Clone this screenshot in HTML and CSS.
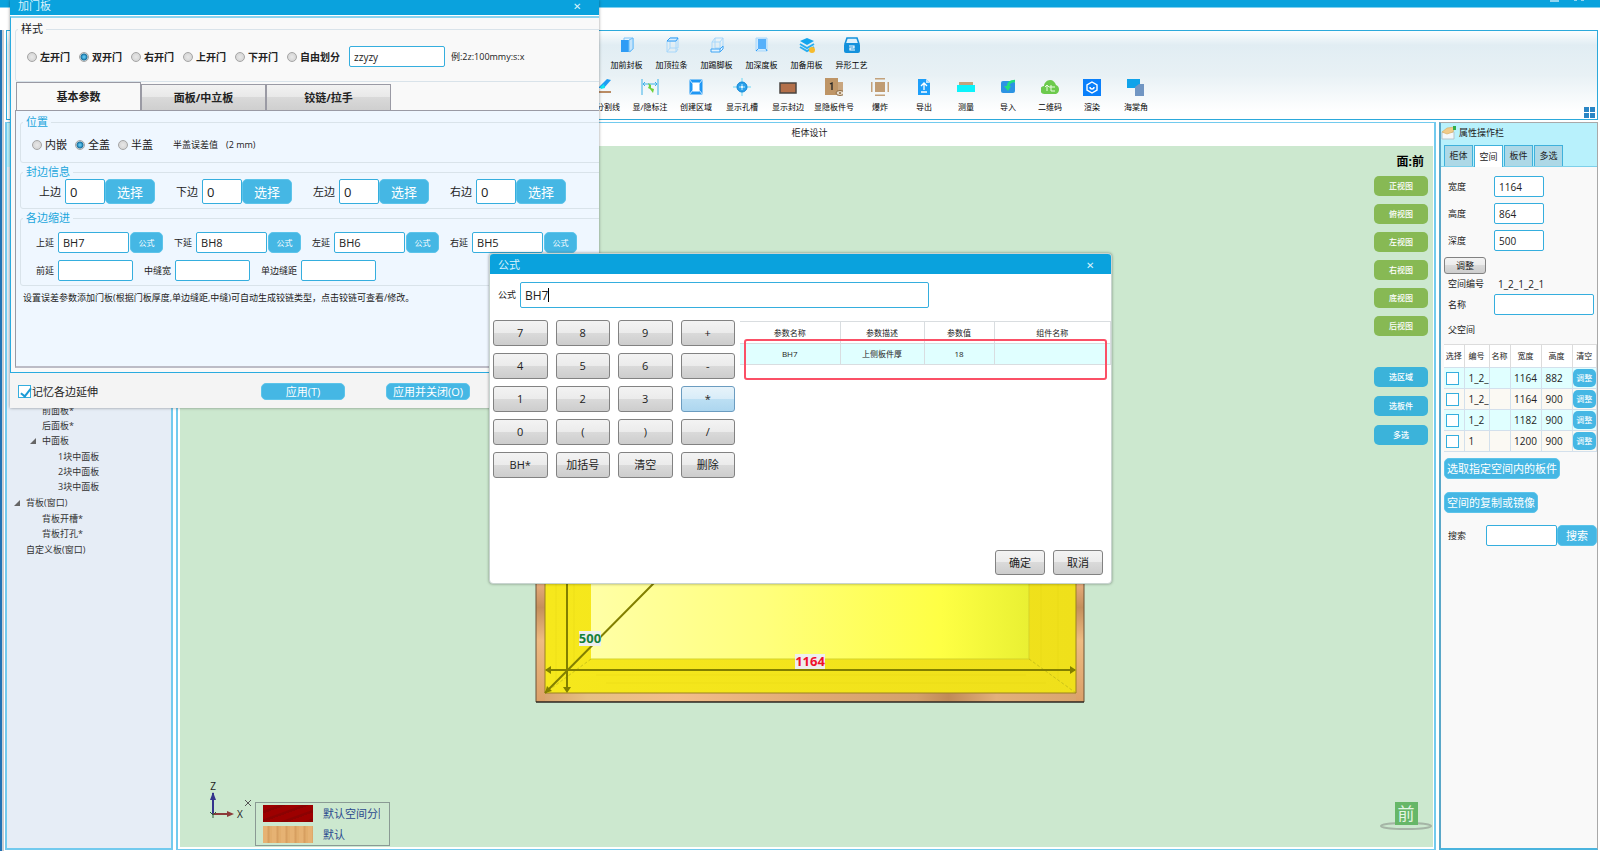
FILE: index.html
```html
<!DOCTYPE html>
<html lang="zh-CN">

<head>
    <meta charset="UTF-8">
    <meta name="viewport" content="width=device-width, initial-scale=1.0">
    <title>柜体设计</title>
    <link rel="stylesheet" href="styles.css">
</head>

<body>
    <div class="app">
        <div class="app-title">
            <svg class="win-ctrl" width="40" height="2" viewBox="0 0 40 2"><path d="M0 1h9M24 0h3M31 0h3" stroke="#bfe6f6" stroke-width="1.5" /></svg>
        </div>
        <div class="menu-strip"></div>

        <!-- Ribbon -->
        <div class="ribbon">
            <div class="tool-row first">
                <button class="tool"><svg viewBox="0 0 18 18"><path d="M6 5V2h9v11l-3 3" fill="#e6f4ff" stroke="#7cc4fa" /><path d="M3 4h8v12H3z" fill="#2f9cf5" /><path d="M11 4l4-2v11l-4 3z" fill="#c5e4fb" stroke="#6bbdf8" /></svg>加前封板</button>
                <button class="tool"><svg viewBox="0 0 18 18"><path d="M4 5h9v11H4zM7 2h8v10H7zM4 16l3-4M13 16l2-3" fill="none" stroke="#a9d8fb" /><path d="M4 5l3-3h8l-2 3z" fill="#d9eefe" stroke="#2f9cf5" /></svg>加顶拉条</button>
                <button class="tool"><svg viewBox="0 0 18 18"><path d="M4 6h8v9H4zM7 2h8v10H7zM4 6l3-4M12 6l3-4" fill="none" stroke="#a9d8fb" /><path d="M3 13h9v3H3zM12 13l3-3v3l-3 3" fill="#e3f3ff" stroke="#3fa5f5" /></svg>加踢脚板</button>
                <button class="tool"><svg viewBox="0 0 18 18"><path d="M3 2h11v13H3z" fill="#cfe9fd" stroke="#a9d8fb" /><path d="M5 3h8v10H5z" fill="#56b0fa" /><path d="M3 15l2-2M13 13l1 2" stroke="#2f9cf5" /></svg>加深度板</button>
                <button class="tool"><svg viewBox="0 0 18 18"><path d="M9 2l7 3-7 4-7-4z" fill="#12a5ee" /><path d="M2 8l7 4 7-4M2 11l7 4 7-4" fill="none" stroke="#28aef0" stroke-width="2" /><circle cx="14" cy="14" r="3" fill="#f6bb2d" /></svg>加备用板</button>
                <button class="tool"><svg viewBox="0 0 18 18"><path d="M2 8l2-6h10l2 6" fill="#dff1fb" stroke="#1391dc" stroke-width="1.6" /><rect x="1" y="7" width="16" height="10" rx="2" fill="#1391dc" /><path d="M6 10h5v2H7v2h5" fill="none" stroke="#fff" stroke-width="1.2" /></svg>异形工艺</button>
            </div>
            <div class="tool-row">
                <button class="tool"><svg viewBox="0 0 18 18"><path d="M3 10L12 1l4 1-7 8z" fill="#1f9cf2" /><path d="M5 9l4-3 1 4-4 1z" fill="#12e4f0" /><path d="M3 14h13" stroke="#b98b64" stroke-width="2" /></svg>加分割线</button>
                <button class="tool"><svg viewBox="0 0 18 18"><path d="M1 1v16M17 1v16M2 6h14M4 4L2 6l2 2M14 4l2 2-2 2" fill="none" stroke="#3db1e8" /><path d="M7 5l3 2 0 3 3 1-1 4-3-4-2-1 1-2z" fill="#6fd13c" /></svg>显/隐标注</button>
                <button class="tool"><svg viewBox="0 0 18 18"><rect x="4" y="3" width="10" height="12" fill="#fff" stroke="#1f97f4" stroke-width="3" /><path d="M2 1l4 5M16 1l-4 5M2 17l4-5M16 17l-4-5" stroke="#cfe9fd" /></svg>创建区域</button>
                <button class="tool"><svg viewBox="0 0 18 18"><path d="M9 0v18M0 9h18" stroke="#6bd7f5" /><circle cx="9" cy="9" r="5" fill="#2ba0ea" stroke="#0e86d6" /><path d="M9 6v6M6 9h6" stroke="#b7ecff" /><circle cx="9" cy="9" r="1" fill="#fff" /></svg>显示孔槽</button>
                <button class="tool"><svg viewBox="0 0 18 18"><rect x="1" y="5" width="16" height="10" fill="#b3704a" stroke="#4b4642" stroke-width="1.5" /></svg>显示封边</button>
                <button class="tool"><svg viewBox="0 0 18 18"><path d="M0 0h13v17H0z" fill="#be9566" /><path d="M13 4h5v9h-5z" fill="#c9a67f" /><path d="M5 6l2-1v7" fill="none" stroke="#222" stroke-width="1.3" /><ellipse cx="15" cy="15" rx="4" ry="2.5" fill="#e8dccb" stroke="#8d6a41" /><circle cx="15" cy="15" r="1" fill="#8d6a41" /></svg>显隐板件号</button>
                <button class="tool"><svg viewBox="0 0 18 18"><rect x="4" y="4" width="10" height="10" fill="#c09c72" /><path d="M4 0h10M4 18h10M0 4v10M18 4v10" stroke="#c3a27b" stroke-width="3" /></svg>爆炸</button>
                <button class="tool narrow"><svg viewBox="0 0 18 18"><path d="M3 1h8l4 4v12H3z" fill="#1d9ffa" /><path d="M11 1v4h4z" fill="#bfe3fd" /><path d="M9 12V6M6 8l3-3 3 3M6 14h6" fill="none" stroke="#fff" stroke-width="1.3" /></svg>导出</button>
                <button class="tool narrow"><svg viewBox="0 0 18 18"><path d="M2 4h14v4H2z" fill="#c4a27c" /><path d="M0 7h18v7H0z" fill="#0cf3fb" /></svg>测量</button>
                <button class="tool narrow"><svg viewBox="0 0 18 18"><rect x="2" y="3" width="14" height="12" rx="2" fill="#2b93e3" /><path d="M16 3c-5 0-7 2-7 6" fill="none" stroke="#20df7c" stroke-width="2.5" /><path d="M5 8h7l-3 5z" fill="#20df7c" /></svg>导入</button>
                <button class="tool narrow"><svg viewBox="0 0 18 18"><path d="M4 16a4 4 0 0 1-1-8c0-3 3-6 6-6s5 2 6 5c4 1 4 8 0 9z" fill="#6cca4d" /><path d="M6 13V7M4 9l2-2 2 2M9 8h2v2H9zM13 8v2M9 12h2v2M13 12v2" fill="none" stroke="#e9fbe2" /></svg>二维码</button>
                <button class="tool narrow"><svg viewBox="0 0 18 18"><path d="M0 1h18v17H0z" fill="#0a80fb" /><path d="M9 4l5 3v5l-5 3-5-3V7z" fill="none" stroke="#fff" stroke-width="1.4" /><path d="M7 9a2 2 0 0 0 4 0" fill="none" stroke="#fff" stroke-width="1.4" /></svg>渲染</button>
                <button class="tool"><svg viewBox="0 0 18 18"><path d="M0 1h13v9H0z" fill="#0fa3ea" /><path d="M8 9l4-3h5v12H8z" fill="#7196c3" /></svg>海棠角</button>
            </div>
            <svg class="grid-icon" width="11" height="11" viewBox="0 0 11 11"><path d="M0 0h5v5H0zM6 0h5v5H6zM0 6h5v5H0zM6 6h5v5H6z" fill="#2a86c5" /></svg>
        </div>

        <div class="workspace">
            <!-- Component tree -->
            <aside class="tree-panel">
                <div class="tree-head"></div>
                <ul class="tree">
                    <li>前面板*</li>
                    <li>后面板*</li>
                    <li><span class="node open">中面板</span>
                        <ul>
                            <li>1块中面板</li>
                            <li>2块中面板</li>
                            <li>3块中面板</li>
                        </ul>
                    </li>
                </ul>
                <ul class="tree root">
                    <li><span class="node open">背板(窗口)</span>
                        <ul>
                            <li>背板开槽*</li>
                            <li>背板打孔*</li>
                        </ul>
                    </li>
                    <li>自定义板(窗口)</li>
                </ul>
            </aside>

            <main class="design">
                <div class="design-tab">柜体设计</div>
                <div class="canvas">
                    <!-- Cabinet model -->
                    <svg class="cabinet" width="550" height="412" viewBox="0 0 550 412">
                        <defs>
                            <linearGradient id="wood" x1="0" x2="1">
                                <stop offset="0" stop-color="#d9a571" />
                                <stop offset=".08" stop-color="#e6c084" />
                                <stop offset=".25" stop-color="#f2bd8b" />
                                <stop offset=".5" stop-color="#e0aa74" />
                                <stop offset=".7" stop-color="#d3a06c" />
                                <stop offset=".76" stop-color="#c08a58" />
                                <stop offset=".85" stop-color="#e2b07c" />
                                <stop offset="1" stop-color="#d9a56f" />
                            </linearGradient>
                            <linearGradient id="woodside" x1="0" x2="0" y1="0" y2="1">
                                <stop offset="0" stop-color="#eeb07f" />
                                <stop offset=".7" stop-color="#eeb282" />
                                <stop offset=".77" stop-color="#c48f5c" />
                                <stop offset=".85" stop-color="#eebb82" />
                                <stop offset="1" stop-color="#dba069" />
                            </linearGradient>
                            <linearGradient id="back" x1="0" x2="1">
                                <stop offset="0" stop-color="#ffffa6" />
                                <stop offset=".4" stop-color="#ffff7c" />
                                <stop offset=".8" stop-color="#feff44" />
                                <stop offset="1" stop-color="#e9f033" />
                            </linearGradient>
                            <linearGradient id="floor" x1="0" x2="1">
                                <stop offset="0" stop-color="#f6e81c" />
                                <stop offset="1" stop-color="#efe01b" />
                            </linearGradient>
                        </defs>
                        <rect x="0" y="0" width="548" height="411" fill="url(#woodside)" />
                        <rect x="9" y="402" width="531" height="8" fill="url(#wood)" />
                        <rect x="9" y="0" width="531" height="402" fill="url(#floor)" />
                        <rect x="55" y="0" width="438" height="368" fill="url(#back)" />
                        <path d="M55 368h438V0" fill="none" stroke="#d5d32a" />
                        <path d="M493 368l47 34M55 368l-46 34" stroke="#b9b51a" stroke-dasharray="3 2" stroke-width="1" opacity=".7" />
                        <path d="M20 0v392M38 0v375M505 0v375M522 0v388M60 384h430M70 392h440" stroke="#e6d715" opacity=".4" />
                        <path d="M9 0v402h531V0" fill="none" stroke="#9a8122" />
                        <path d="M0 0v411M548 0v411" stroke="#6b5236" />
                        <path d="M0 411h548" stroke="#2b2620" stroke-width="1.5" />
                        <path d="M31 0v400M10 379h529M9 402L118 292 400 8" fill="none" stroke="#827f00" stroke-width="2" />
                        <path d="M27 396h8l-4 6zM9 379l6-4v8zM540 379l-6-4v8zM9 402l2-7 5 5z" fill="#827f00" />
                        <rect x="43" y="340" width="22" height="15" fill="#eee" />
                        <text x="54" y="352" class="dim green">500</text>
                        <rect x="259" y="363" width="30" height="15" fill="#eee" />
                        <text x="274" y="375" class="dim red">1164</text>
                    </svg>

                    <div class="views">
                        <strong class="face">面:前</strong>
                        <button class="view">正视图</button>
                        <button class="view">俯视图</button>
                        <button class="view">左视图</button>
                        <button class="view">右视图</button>
                        <button class="view">底视图</button>
                        <button class="view">后视图</button>
                        <div class="picks">
                            <button class="view pick">选区域</button>
                            <button class="view pick">选板件</button>
                            <button class="view pick">多选</button>
                        </div>
                    </div>

                    <!-- Axis and material legend -->
                    <svg class="axis" width="50" height="44" viewBox="0 0 50 44">
                        <path d="M8 33V12" stroke="#34348c" stroke-width="2" /><path d="M8 11l3 8H5z" fill="#34348c" />
                        <path d="M8 33h15" stroke="#8c3a3a" stroke-width="2" /><path d="M29 33l-7-3v6z" fill="#8c3a3a" />
                        <path d="M5 31l3 3 3-3M8 34v3" fill="none" stroke="#2f5a3a" />
                        <text x="8" y="9" class="axis-name">Z</text>
                        <text x="35" y="37" class="axis-name">X</text>
                        <path d="M40 19l6 6M46 19l-6 6" stroke="#555" />
                    </svg>
                    <div class="legend">
                        <span class="swatch red"></span><span class="mat">默认空间分隔</span>
                        <span class="swatch oak"></span><span class="mat">默认</span>
                    </div>
                    <div class="cube">
                        <svg width="54" height="10" viewBox="0 0 54 10"><ellipse cx="27" cy="5" rx="25" ry="3" fill="none" stroke="#a5b5a6" stroke-width="2" /></svg>
                        <span>前</span>
                    </div>
                </div>
            </main>

            <!-- Property panel -->
            <aside class="props">
                <div class="props-head">
                    <svg width="16" height="14" viewBox="0 0 16 14"><path d="M1 6h12v7H1z" fill="#f4f8fa" stroke="#b5c5cc" /><path d="M1 6l5-4 8-1-2 5-6 2z" fill="#f0cb8a" stroke="#d7a95c" stroke-width=".6" /><path d="M12 0h3v4h-3z" fill="#2fae4a" /></svg>
                    属性操作栏
                </div>
                <div class="props-tabs">
                    <button>柜体</button>
                    <button class="active">空间</button>
                    <button>板件</button>
                    <button>多选</button>
                </div>
                <div class="props-body">
                    <div class="props-form">
                        <label for="p-w">宽度</label><input id="p-w" value="1164">
                        <label for="p-h">高度</label><input id="p-h" value="864">
                        <label for="p-d">深度</label><input id="p-d" value="500">
                    </div>
                    <button class="gray-btn adjust">调整</button>
                    <div class="props-line"><span>空间编号</span><span class="code">1_2_1_2_1</span></div>
                    <div class="props-line name"><label for="p-name">名称</label><input id="p-name"></div>
                    <div class="parent">父空间</div>
                    <table class="spaces">
                        <colgroup><col class="c1"><col class="c2"><col class="c3"><col class="c4"><col class="c5"><col></colgroup>
                        <thead>
                            <tr><th>选择</th><th>编号</th><th>名称</th><th>宽度</th><th>高度</th><th>清空</th></tr>
                        </thead>
                        <tbody>
                            <tr><td><input type="checkbox" aria-label="选择"></td><td class="l">1_2_</td><td></td><td>1164</td><td class="l">882</td><td><button class="pill">调整</button></td></tr>
                            <tr><td><input type="checkbox" aria-label="选择"></td><td class="l">1_2_</td><td></td><td>1164</td><td class="l">900</td><td><button class="pill">调整</button></td></tr>
                            <tr><td><input type="checkbox" aria-label="选择"></td><td class="l">1_2</td><td></td><td>1182</td><td class="l">900</td><td><button class="pill">调整</button></td></tr>
                            <tr><td><input type="checkbox" aria-label="选择"></td><td class="l">1</td><td></td><td>1200</td><td class="l">900</td><td><button class="pill">调整</button></td></tr>
                        </tbody>
                    </table>
                    <button class="blue-btn wide">选取指定空间内的板件</button>
                    <button class="blue-btn wide">空间的复制或镜像</button>
                    <div class="search">
                        <label for="p-search">搜索</label><input id="p-search"><button class="blue-btn">搜索</button>
                    </div>
                </div>
            </aside>
        </div>
    </div>

    <!-- Door dialog -->
    <section class="dialog door">
        <header class="dialog-title"><span>加门板</span><button class="close" aria-label="关闭">✕</button></header>
        <div class="door-body">
            <fieldset class="style-set">
                <legend>样式</legend>
                <div class="radios bold">
                    <label><input type="radio" name="style">左开门</label>
                    <label><input type="radio" name="style" checked>双开门</label>
                    <label><input type="radio" name="style">右开门</label>
                    <label><input type="radio" name="style">上开门</label>
                    <label><input type="radio" name="style">下开门</label>
                    <label><input type="radio" name="style">自由划分</label>
                    <input class="split" value="zzyzy" aria-label="自由划分">
                    <span class="hint">例:2z:100mmy:s:x</span>
                </div>
            </fieldset>
            <div class="door-tabs">
                <button class="active">基本参数</button>
                <button>面板/中立板</button>
                <button>铰链/拉手</button>
            </div>
            <div class="door-page">
                <fieldset>
                    <legend>位置</legend>
                    <div class="radios pos">
                        <label><input type="radio" name="pos">内嵌</label>
                        <label><input type="radio" name="pos" checked>全盖</label>
                        <label><input type="radio" name="pos">半盖</label>
                        <span class="tol">半盖误差值</span><span class="hint">(2 mm)</span>
                    </div>
                </fieldset>
                <fieldset>
                    <legend>封边信息</legend>
                    <div class="edges">
                        <div class="edge"><label for="e1">上边</label><input id="e1" value="0"><button class="blue-btn">选择</button></div>
                        <div class="edge"><label for="e2">下边</label><input id="e2" value="0"><button class="blue-btn">选择</button></div>
                        <div class="edge"><label for="e3">左边</label><input id="e3" value="0"><button class="blue-btn">选择</button></div>
                        <div class="edge"><label for="e4">右边</label><input id="e4" value="0"><button class="blue-btn">选择</button></div>
                    </div>
                </fieldset>
                <fieldset>
                    <legend>各边缩进</legend>
                    <div class="insets">
                        <div class="inset"><label for="i1">上延</label><input id="i1" value="BH7"><button class="blue-btn">公式</button></div>
                        <div class="inset"><label for="i2">下延</label><input id="i2" value="BH8"><button class="blue-btn">公式</button></div>
                        <div class="inset"><label for="i3">左延</label><input id="i3" value="BH6"><button class="blue-btn">公式</button></div>
                        <div class="inset last"><label for="i4">右延</label><input id="i4" value="BH5"><button class="blue-btn">公式</button></div>
                    </div>
                    <div class="insets second">
                        <div class="inset"><label for="i5">前延</label><input id="i5"></div>
                        <div class="inset"><label for="i6">中缝宽</label><input id="i6"></div>
                        <div class="inset"><label for="i7">单边缝距</label><input id="i7"></div>
                    </div>
                </fieldset>
                <p class="note">设置误差参数添加门板(根据门板厚度,单边缝距,中缝)可自动生成铰链类型，点击铰链可查看/修改。</p>
            </div>
        </div>
        <footer class="door-foot">
            <label class="remember"><input type="checkbox" checked>记忆各边延伸</label>
            <button class="blue-btn">应用(T)</button>
            <button class="blue-btn">应用并关闭(O)</button>
        </footer>
    </section>

    <!-- Formula dialog -->
    <section class="dialog formula">
        <header class="dialog-title"><span>公式</span><button class="close" aria-label="关闭">✕</button></header>
        <div class="formula-line">
            <label for="formula">公式</label>
            <div class="formula-box"><input id="formula" value="BH7"><i class="caret"></i></div>
        </div>
        <div class="formula-main">
            <div class="keys">
                <button class="gray-btn">7</button><button class="gray-btn">8</button><button class="gray-btn">9</button><button class="gray-btn">+</button>
                <button class="gray-btn">4</button><button class="gray-btn">5</button><button class="gray-btn">6</button><button class="gray-btn">-</button>
                <button class="gray-btn">1</button><button class="gray-btn">2</button><button class="gray-btn">3</button><button class="gray-btn hot">*</button>
                <button class="gray-btn">0</button><button class="gray-btn">(</button><button class="gray-btn">)</button><button class="gray-btn">/</button>
                <button class="gray-btn">BH*</button><button class="gray-btn">加括号</button><button class="gray-btn">清空</button><button class="gray-btn">删除</button>
            </div>
            <div class="params-wrap">
                <table class="params">
                    <colgroup><col class="c1"><col class="c2"><col class="c3"><col></colgroup>
                    <thead>
                        <tr><th>参数名称</th><th>参数描述</th><th>参数值</th><th>组件名称</th></tr>
                    </thead>
                    <tbody>
                        <tr><td>BH7</td><td>上侧板件厚</td><td>18</td><td></td></tr>
                    </tbody>
                </table>
                <div class="mark"></div>
            </div>
        </div>
        <footer class="formula-foot">
            <button class="gray-btn">确定</button>
            <button class="gray-btn">取消</button>
        </footer>
    </section>
</body>

</html>
```

FILE: styles.css
```css
* {
    box-sizing: border-box;
}

body {
    margin: 0;
    height: 100vh;
    overflow: hidden;
    font-family: "Open Sans", "Noto Sans CJK SC", sans-serif;
    font-size: 9px;
    line-height: 12px;
    color: #222;
}

button,
input {
    font-family: inherit;
    font-size: inherit;
    line-height: inherit;
    color: inherit;
    margin: 0;
    padding: 0;
}

button {
    border: none;
    background: none;
    white-space: nowrap;
}

input {
    min-width: 0;
    padding: 0 4px;
    border: 1px solid #35aede;
    border-radius: 2px;
    background: #fff;
    outline: none;
}

label,
.code,
.tol,
.hint {
    white-space: nowrap;
}

/* main window */
.app {
    display: flex;
    flex-direction: column;
    height: 100vh;
    background: linear-gradient(90deg, #2272b4 0 2px, #c9ccd0 2px 4px, #fff 4px);
}

.app-title {
    height: 8px;
    background: #0aa2dd;
    border-bottom: 1px solid #7fd0f0;
    display: flex;
    justify-content: flex-end;
    padding-right: 10px;
}

.menu-strip {
    height: 22px;
    background: #fff;
}

.ribbon {
    display: flex;
    flex-direction: column;
    gap: 7px;
    position: relative;
    height: 90px;
    margin: 0 2px 2px 6px;
    padding-top: 5px;
    border: 1px solid #2ca9db;
    background: linear-gradient(#fbfdfe, #e1edf3 16%, #e8f1f5 50%, #fff 92%);
}

.tool-row {
    display: flex;
    padding-left: 574px;
}

.tool-row.first {
    padding-left: 597px;
}

.tool {
    display: flex;
    flex-direction: column;
    align-items: center;
    gap: 5px;
    flex: none;
    width: 46px;
    font-size: 8px;
    color: #000;
}

.first .tool {
    width: 45px;
}

.tool.narrow {
    width: 42px;
}

.tool svg {
    width: 18px;
    height: 18px;
}

.grid-icon {
    position: absolute;
    right: 2px;
    bottom: 1px;
}

.workspace {
    flex: 1;
    min-height: 0;
    display: flex;
    gap: 3px;
    padding: 0 2px 1px 5px;
}

/* tree */
.tree-panel {
    width: 168px;
    border: 2px solid #72caee;
    border-top-width: 1px;
    background: #e6edf6;
    color: #333;
}

.tree-head {
    height: 44px;
    margin-bottom: 236px;
    background: #b8f1fc;
}

.tree,
.tree ul {
    list-style: none;
    margin: 0;
    line-height: 15px;
}

.tree {
    padding: 0 0 0 35px;
}

.tree.root {
    padding-left: 19px;
}

.tree ul {
    padding: 1px 0 1px 16px;
}

.node {
    display: block;
    position: relative;
}

.node.open::before {
    content: "";
    position: absolute;
    left: -12px;
    top: 5px;
    border-left: 6px solid transparent;
    border-bottom: 6px solid #666;
}

/* design area */
.design {
    flex: 1;
    display: flex;
    flex-direction: column;
    border: 2px solid #72caee;
    border-top-width: 1px;
    border-bottom-width: 1px;
    padding: 0 1px 2px 2px;
    background: #fff;
}

.design-tab {
    height: 23px;
    padding-top: 4px;
    padding-left: 6px;
    text-align: center;
}

.canvas {
    flex: 1;
    position: relative;
    background: #cce8cf;
}

.cabinet {
    position: absolute;
    left: 356px;
    bottom: 144px;
    overflow: visible;
}

.dim {
    font-size: 13px;
    font-weight: 700;
    text-anchor: middle;
}

.dim.green {
    fill: #15803a;
}

.dim.red {
    fill: #f0102c;
}

.views {
    position: absolute;
    right: 5px;
    top: 10px;
    display: flex;
    flex-direction: column;
    gap: 8px;
    width: 54px;
}

.face {
    font-size: 12px;
    line-height: 12px;
    color: #000;
    text-align: right;
    padding-right: 4px;
}

.view {
    height: 20px;
    border-radius: 5px;
    background: #87b954;
    color: #fff;
    font-size: 8px;
    font-weight: 500;
}

.picks {
    display: flex;
    flex-direction: column;
    gap: 9px;
    padding-top: 23px;
}

.view.pick {
    background: #3bb3da;
}

.axis {
    position: absolute;
    left: 25px;
    bottom: 22px;
    overflow: visible;
}

.axis-name {
    font-size: 10px;
    text-anchor: middle;
    fill: #222;
}

.legend {
    position: absolute;
    left: 75px;
    bottom: 1px;
    display: grid;
    grid-template-columns: 50px 57px;
    grid-auto-rows: 17px;
    gap: 4px 10px;
    width: 135px;
    padding: 2px 7px;
    border: 1px solid #8a9a94;
}

.swatch.red {
    background: repeating-linear-gradient(160deg, #9d0000 0 5px, #8b0202 6px 8px);
}

.swatch.oak {
    background: repeating-linear-gradient(90deg, #e6b273 0 4px, #d79f60 5px 6px, #e2ad6c 7px 9px);
}

.mat {
    overflow: hidden;
    white-space: nowrap;
    font-size: 11px;
    line-height: 17px;
    color: #2b4a8e;
}

.cube {
    position: absolute;
    right: 0;
    bottom: 16px;
    width: 54px;
    height: 29px;
    display: flex;
    justify-content: center;
}

.cube svg {
    position: absolute;
    left: 0;
    bottom: 0;
}

.cube span {
    position: relative;
    width: 23px;
    height: 23px;
    background: #66b768;
    color: #e3f5e3;
    font-size: 17px;
    line-height: 23px;
    text-align: center;
}

/* properties */
.props {
    width: 159px;
    border: 1px solid #a9a9a9;
    border-left: 2px solid #5aa7c8;
    border-bottom: 2px solid #4ab4de;
    background: #f9f9f9;
}

.props-head {
    display: flex;
    align-items: center;
    gap: 2px;
    height: 22px;
    padding-bottom: 2px;
    background: #b8f1fc;
}

.props-tabs {
    display: flex;
    gap: 1px;
    height: 22px;
    padding-left: 3px;
    background: #b8f1fc;
    border-bottom: 1px solid #7ed0ea;
}

.props-tabs button {
    width: 29px;
    border: 1px solid #3fb1dc;
    border-bottom: none;
    background: #add8e6;
}

.props-tabs .active {
    height: 22px;
    background: #fff;
}

.props-body {
    padding: 9px 0 0 3px;
}

.props-form {
    display: grid;
    grid-template-columns: 46px 50px;
    gap: 6px 0;
    align-items: center;
    padding-left: 4px;
}

.props-form input,
.props-line input,
.search input {
    height: 21px;
    font-size: 10px;
}

.gray-btn {
    border: 1px solid #828282;
    border-radius: 3px;
    background: linear-gradient(#f3f3f3, #ebebeb 50%, #dadada 50%, #cdcdcd);
    color: #222;
}

.adjust {
    display: block;
    width: 42px;
    height: 17px;
    margin-top: 6px;
}

.props-line {
    display: flex;
    align-items: center;
    height: 20px;
    padding-left: 4px;
}

.props-line span:first-child,
.props-line label {
    width: 46px;
}

.props-line .code {
    padding-left: 4px;
    font-size: 10px;
}

.props-line.name {
    height: 21px;
}

.props-line input {
    width: 100px;
}

.parent {
    padding-left: 4px;
    line-height: 29px;
}

.spaces,
.params {
    table-layout: fixed;
    border-collapse: collapse;
    width: 100%;
}

.spaces th,
.spaces td,
.params th,
.params td {
    padding: 0;
    font-weight: 400;
    text-align: center;
    white-space: nowrap;
    overflow: hidden;
}

.spaces th {
    height: 23px;
    background: #fff;
    border: 1px solid #dcdcdc;
    border-width: 1px 1px 0 0;
    font-size: 8px;
}

.spaces td {
    height: 21px;
    border: 1px solid #d3e0ec;
    border-width: 1px 1px 1px 0;
    font-size: 10px;
    background: #fbf9f3;
}

.spaces tr:nth-child(odd) td {
    background: #e0ffff;
}

.spaces .l {
    text-align: left;
    padding-left: 4px;
}

.spaces .c1 { width: 20px; }
.spaces .c2 { width: 25px; }
.spaces .c3 { width: 21px; }
.spaces .c4 { width: 31px; }
.spaces .c5 { width: 31px; }

input[type="checkbox"] {
    appearance: none;
    display: block;
    width: 13px;
    height: 13px;
    padding: 0;
    border-radius: 0;
}

.spaces input {
    margin-left: 2px;
}

.pill {
    display: block;
    width: 100%;
    height: 18px;
    border-radius: 5px;
    background: #45b7e4;
    color: #fff;
    font-size: 8px;
}

.blue-btn {
    border: 1px solid #5cc4ea;
    border-radius: 5px;
    background: #45b7e4;
    color: #fff;
}

.blue-btn.wide {
    display: block;
    height: 21px;
    margin: 6px 0 13px;
    padding: 0 2px;
    font-size: 11px;
}

.search {
    display: flex;
    align-items: center;
    padding-left: 4px;
}

.blue-btn.wide + .blue-btn.wide {
    margin: 13px 0 12px;
}

.search label {
    width: 38px;
}

.search input {
    width: 71px;
}

.search button {
    flex: 1;
    height: 21px;
    font-size: 11px;
}

/* dialogs */
.dialog {
    position: absolute;
    display: flex;
    flex-direction: column;
    overflow: hidden;
    background: #fff;
    box-shadow: 0 0 3px rgba(0, 0, 0, 0.4);
}

.dialog-title {
    display: flex;
    align-items: center;
    justify-content: space-between;
    background: #0aa2dd;
    color: #d9f2fc;
    font-size: 11px;
}

.close {
    width: 12px;
    font-size: 10px;
}

.door {
    left: 10px;
    top: 0;
    width: 589px;
    height: 408px;
}

.door .dialog-title {
    height: 17px;
    padding: 0 16px 3px 8px;
    border-bottom: 1px solid #fff;
}

.door-body {
    flex: 1;
    padding: 4px 0 4px 4px;
    border: 1px solid #2aabdf;
    border-top: 2px solid #8ad3ef;
    border-right: none;
    background: #f9f9f9;
}

fieldset {
    min-width: 0;
    margin: 2px -8px 0 0;
    padding: 0;
    border: 1px solid #d9e3ea;
    border-radius: 3px;
}

legend {
    margin-left: 2px;
    padding: 0 3px;
    font-size: 11px;
    line-height: 14px;
    color: #1ba6dc;
}

.style-set {
    margin-top: 0;
}

.style-set legend {
    color: #222;
}

.radios {
    display: flex;
    align-items: center;
    gap: 9px;
    height: 45px;
    padding: 0 0 4px 11px;
}

.radios.pos {
    gap: 8px;
    height: 33px;
    padding: 0 0 2px 11px;
    font-size: 11px;
}

.radios label {
    display: flex;
    align-items: center;
    gap: 3px;
}

.radios.bold label {
    font-size: 10px;
    font-weight: 700;
}

.radios.pos label {
    gap: 3px;
}

input[type="radio"] {
    appearance: none;
    width: 10px;
    height: 10px;
    padding: 0;
    border: 1px solid #a5a5a5;
    border-radius: 50%;
    background: radial-gradient(#e8e8e8, #cfcfcf);
}

input[type="radio"]:checked {
    background: radial-gradient(#58c0ec 0 1px, #17709f 3px, #e4e4e4 4px);
}

.split {
    width: 96px;
    height: 21px;
    font-size: 10px;
}

.hint {
    font-size: 9px;
}

.style-set .hint {
    margin-left: -3px;
}

.tol {
    padding-left: 12px;
    font-size: 9px;
}

.door-tabs {
    display: flex;
    align-items: flex-end;
    height: 28px;
    padding-left: 1px;
}

.door-tabs button {
    width: 125px;
    height: 26px;
    border: 1px solid #9a9aa4;
    border-bottom: none;
    background: linear-gradient(#f2f2f2, #e8e8e8 50%, #d9d9d9 50%, #cfcfcf);
    font-size: 11px;
    font-weight: 700;
}

.door-tabs .active {
    height: 28px;
    background: #f9f9f9;
}

.door-page {
    height: 258px;
    padding: 2px 0 0 4px;
    border: 1px solid #9a9aa4;
    border-right: none;
    border-bottom: 2px solid #bcbcc6;
    background: #eff7ff;
}

.edges {
    display: flex;
    gap: 21px;
    padding: 0 0 4px 18px;
}

.edge,
.inset {
    display: flex;
    align-items: center;
}

.edge label {
    padding-right: 4px;
    font-size: 11px;
}

.edge input {
    width: 40px;
    height: 25px;
    font-size: 13px;
}

.edge button {
    width: 50px;
    height: 25px;
    font-size: 13px;
}

.insets {
    display: flex;
    gap: 11px;
    padding: 7px 0 0 15px;
}

.insets.second {
    padding-bottom: 4px;
}

.inset label {
    padding-right: 4px;
}

.inset input {
    width: 71px;
    height: 21px;
    font-size: 11px;
}

.second .inset input {
    width: 75px;
}

.inset button {
    width: 33px;
    height: 21px;
    margin-left: 1px;
    font-size: 8px;
}

.note {
    margin: 6px 0 0 3px;
    white-space: nowrap;
}

.door-foot {
    display: flex;
    align-items: center;
    height: 36px;
    padding: 2px 0 0 8px;
    background: #f4f4f4;
    font-size: 11px;
}

.door-foot .blue-btn {
    width: 84px;
    height: 17px;
    margin-right: 41px;
}

.remember {
    display: flex;
    align-items: center;
    gap: 1px;
    width: 243px;
}

.remember input:checked {
    position: relative;
}

.remember input:checked::after {
    content: "";
    position: absolute;
    left: 4px;
    top: 0;
    width: 4px;
    height: 9px;
    border: solid #1a9ad6;
    border-width: 0 2px 2px 0;
    transform: rotate(38deg);
}

.formula {
    left: 489px;
    top: 253px;
    width: 623px;
    height: 331px;
    border: 1px solid #c8d4d0;
    border-radius: 4px;
}

.formula .dialog-title {
    flex: none;
    height: 21px;
    margin: -1px -1px 0;
    padding: 2px 16px 0 9px;
}

.formula-line {
    display: flex;
    align-items: center;
    gap: 4px;
    padding: 8px 8px 12px;
}

.formula-box {
    position: relative;
}

.formula-box input {
    width: 409px;
    height: 26px;
    font-size: 12px;
}

.caret {
    position: absolute;
    left: 28px;
    top: 6px;
    width: 1px;
    height: 14px;
    background: #000;
}

.formula-main {
    flex: 1;
    display: flex;
    gap: 5px;
    padding-left: 3px;
}

.keys {
    display: grid;
    grid-template-columns: repeat(4, 1fr);
    grid-auto-rows: 26px;
    gap: 7px 8px;
    width: 242px;
    align-content: start;
    font-size: 11px;
}

.gray-btn.hot {
    border-color: #6b9cc0;
    background: linear-gradient(#e7f3fa, #d8ecf8 50%, #bcdff3 50%, #add6ef);
}

.params-wrap {
    position: relative;
    flex: 1;
    padding-top: 1px;
}

.params th,
.params td {
    height: 22px;
    border: 1px solid #d9dde0;
    border-left: none;
    font-size: 8px;
}

.params td {
    height: 21px;
    background: #e0ffff;
}

.params .c1 { width: 100px; }
.params .c2 { width: 84px; }
.params .c3 { width: 70px; }

/* highlighted parameter */
.mark {
    position: absolute;
    left: 4px;
    right: 4px;
    top: 19px;
    height: 41px;
    border: 2px solid #fb5066;
    border-radius: 3px;
}

.formula-foot {
    display: flex;
    justify-content: flex-end;
    gap: 8px;
    padding: 0 8px 8px;
}

.formula-foot button {
    width: 50px;
    height: 25px;
    font-size: 11px;
}
```
